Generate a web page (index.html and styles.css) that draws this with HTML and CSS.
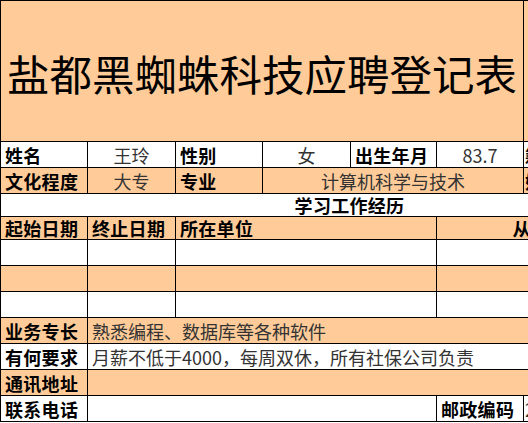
FILE: index.html
```html
<!DOCTYPE html>
<html lang="zh-CN">
<head>
<meta charset="utf-8">
<title>盐都黑蜘蛛科技应聘登记表</title>
<link rel="stylesheet" href="styles.css">
</head>
<body>
<div class="sheet">
  <div class="cell title span6">盐都黑蜘蛛科技应聘登记表</div>
  <div class="cell peach span2"></div>

  <div class="cell label">姓名</div>
  <div class="cell value">王玲</div>
  <div class="cell label">性别</div>
  <div class="cell value">女</div>
  <div class="cell label">出生年月</div>
  <div class="cell value">83.7</div>
  <div class="cell label edge">籍贯</div>
  <div class="cell"></div>

  <div class="cell label peach">文化程度</div>
  <div class="cell value peach">大专</div>
  <div class="cell label peach">专业</div>
  <div class="cell value peach span3">计算机科学与技术</div>
  <div class="cell label peach edge">婚否</div>
  <div class="cell peach"></div>

  <div class="cell label center span8">学习工作经历</div>

  <div class="cell label peach">起始日期</div>
  <div class="cell label peach">终止日期</div>
  <div class="cell label peach span3">所在单位</div>
  <div class="cell label peach center span3">从事何种工作</div>

  <div class="cell"></div>
  <div class="cell"></div>
  <div class="cell span3"></div>
  <div class="cell span3"></div>

  <div class="cell peach"></div>
  <div class="cell peach"></div>
  <div class="cell peach span3"></div>
  <div class="cell peach span3"></div>

  <div class="cell"></div>
  <div class="cell"></div>
  <div class="cell span3"></div>
  <div class="cell span3"></div>

  <div class="cell label peach">业务专长</div>
  <div class="cell value left peach span7">熟悉编程、数据库等各种软件</div>

  <div class="cell label">有何要求</div>
  <div class="cell value left span7">月薪不低于4000，每周双休，所有社保公司负责</div>

  <div class="cell label peach">通讯地址</div>
  <div class="cell peach span7"></div>

  <div class="cell label">联系电话</div>
  <div class="cell span4"></div>
  <div class="cell label">邮政编码</div>
  <div class="cell value left edge-value span2">224000</div>
</div>
</body>
</html>
```

FILE: styles.css
```css
html, body {
  margin: 0;
  padding: 0;
  overflow: hidden;
  background: #ffffff;
}

.sheet {
  display: grid;
  width: max-content;
  grid-template-columns: 86px 87px 86px 87px 85px 86px 87px 86px;
  grid-template-rows: 140px 25px 25px 22px 22px 25px 25px 25px 25px 25px 25px 25px;
  gap: 1px;
  padding: 1px;
  background: #000000;
  font-family: "Noto Sans CJK SC", sans-serif;
  font-size: 18px;
  color: #000000;
}

.cell {
  background: #ffffff;
  display: flex;
  align-items: center;
  overflow: hidden;
  white-space: nowrap;
  line-height: 1;
}

.peach {
  background: #ffcc99;
}

.title {
  background: #ffcc99;
  justify-content: center;
  font-size: 42.5px;
  font-weight: 400;
  padding-top: 4px;
}

.label {
  font-weight: 700;
  padding-left: 4px;
  letter-spacing: 0.3px;
}

.value {
  justify-content: center;
  color: #333333;
  font-weight: 400;
}

.value.left {
  justify-content: flex-start;
  padding-left: 4px;
}

.center {
  justify-content: center;
  padding-left: 0;
}

.edge {
  padding-left: 1px;
}

.value.edge-value {
  padding-left: 1px;
}

.span2 { grid-column: span 2; }
.span3 { grid-column: span 3; }
.span4 { grid-column: span 4; }
.span6 { grid-column: span 6; }
.span7 { grid-column: span 7; }
.span8 { grid-column: span 8; }
```
